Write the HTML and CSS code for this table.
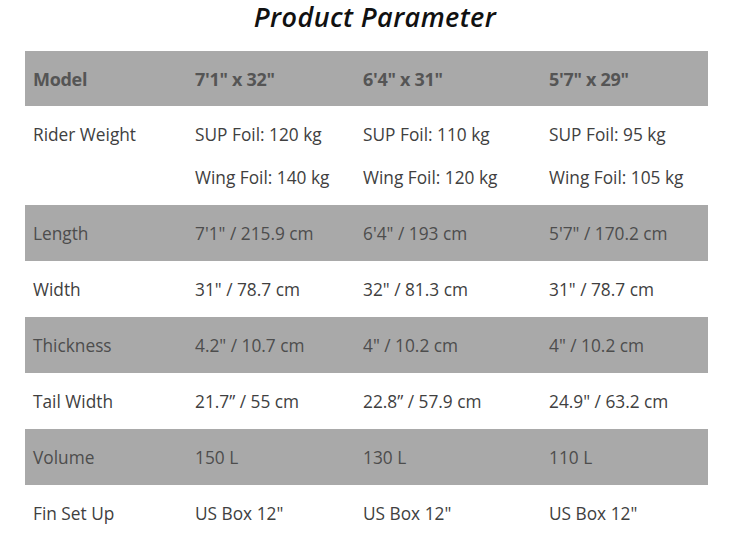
FILE: index.html
```html
<!DOCTYPE html>
<html>
<head>
<meta charset="utf-8">
<link rel="stylesheet" href="styles.css">
</head>
<body>
<div class="page">
  <h1 class="title">Product Parameter</h1>
  <table class="params">
    <colgroup>
      <col class="c1"><col class="c2"><col class="c3"><col class="c4">
    </colgroup>
    <tr class="head shade">
      <td>Model</td><td>7'1" x 32"</td><td>6'4" x 31"</td><td>5'7" x 29"</td>
    </tr>
    <tr class="tall">
      <td class="top">Rider Weight</td>
      <td><div class="ln">SUP Foil: 120 kg</div><div class="ln">Wing Foil: 140 kg</div></td>
      <td><div class="ln">SUP Foil: 110 kg</div><div class="ln">Wing Foil: 120 kg</div></td>
      <td><div class="ln">SUP Foil: 95 kg</div><div class="ln">Wing Foil: 105 kg</div></td>
    </tr>
    <tr class="shade">
      <td>Length</td><td>7'1" / 215.9 cm</td><td>6'4" / 193 cm</td><td>5'7" / 170.2 cm</td>
    </tr>
    <tr>
      <td>Width</td><td>31" / 78.7 cm</td><td>32" / 81.3 cm</td><td>31" / 78.7 cm</td>
    </tr>
    <tr class="shade">
      <td>Thickness</td><td>4.2" / 10.7 cm</td><td>4" / 10.2 cm</td><td>4" / 10.2 cm</td>
    </tr>
    <tr>
      <td>Tail Width</td><td>21.7” / 55 cm</td><td>22.8” / 57.9 cm</td><td>24.9" / 63.2 cm</td>
    </tr>
    <tr class="shade">
      <td>Volume</td><td>150 L</td><td>130 L</td><td>110 L</td>
    </tr>
    <tr>
      <td>Fin Set Up</td><td>US Box 12"</td><td>US Box 12"</td><td>US Box 12"</td>
    </tr>
  </table>
</div>
</body>
</html>
```
FILE: styles.css
```css
html, body {
  margin: 0;
  padding: 0;
  background: #ffffff;
}
.page {
  width: 750px;
  font-family: "Open Sans", "Liberation Sans", sans-serif;
}
.title {
  margin: 0;
  height: 51px;
  box-sizing: border-box;
  padding-top: 0;
  text-align: center;
  font-size: 27px;
  line-height: 33px;
  font-style: italic;
  font-weight: 600;
  letter-spacing: 0.4px;
  color: #111111;
}
.params {
  margin-left: 25px;
  width: 683px;
  border-collapse: collapse;
  table-layout: fixed;
  font-size: 17.3px;
  color: #404040;
}
.c1 { width: 162px; }
.c2 { width: 168px; }
.c3 { width: 186px; }
.c4 { width: 167px; }
.params td {
  height: 56px;
  padding: 0 0 0 8px;
  vertical-align: middle;
  box-sizing: border-box;
  white-space: nowrap;
}
.params tr.shade td {
  background: #a9a9a9;
  color: #4d4d4d;
}
.params tr.head td {
  height: 55px;
  font-weight: 700;
  font-size: 18px;
  letter-spacing: -0.3px;
  color: #555555;
}
.params tr.tall td {
  height: 99px;
  padding-top: 7px;
  padding-bottom: 6px;
  vertical-align: top;
}
.ln {
  line-height: 43px;
}
.params td.top {
  line-height: 43px;
}
```
